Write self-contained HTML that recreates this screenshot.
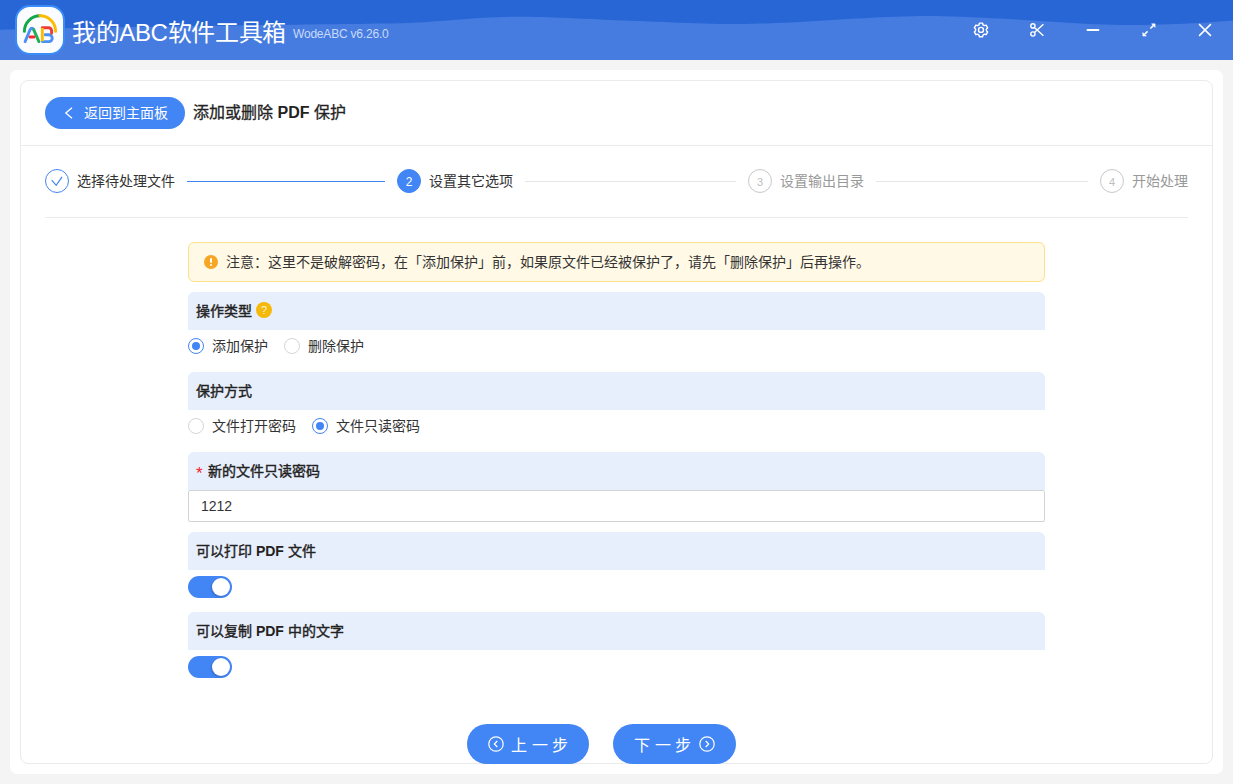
<!DOCTYPE html>
<html lang="zh-CN">
<head>
<meta charset="utf-8">
<style>
*{box-sizing:border-box;margin:0;padding:0}
html,body{width:1233px;height:784px;overflow:hidden;background:#f4f4f4;font-family:"Liberation Sans",sans-serif;color:#333}
.abs{position:absolute}
#hdr{position:absolute;left:0;top:0;width:1233px;height:60px;background:#467cdf;overflow:hidden}
#logo{position:absolute;left:15px;top:5px;width:50px;height:50px;border-radius:15px;background:#fbfcff;border:2px solid #3a8cf8}
#title{position:absolute;left:72px;top:17px;font-size:24px;line-height:32px;color:#fff;white-space:nowrap;letter-spacing:-0.35px}
#ver{position:absolute;left:293px;top:26px;font-size:12px;line-height:16px;color:#c9dafa;white-space:nowrap;letter-spacing:-0.2px}
#outer{position:absolute;left:10px;top:70px;width:1213px;height:704px;background:#fff;border-radius:7px}
#inner{position:absolute;left:20px;top:80px;width:1193px;height:684px;background:#fff;border:1px solid #ebebeb;border-radius:8px}
.btn{position:absolute;background:#4285f4;color:#fff;white-space:nowrap}
.t14{font-size:14px;line-height:20px;white-space:nowrap}
.hline{position:absolute;height:1px;background:#ebebeb}
.step-c{position:absolute;width:24px;height:24px;border-radius:50%;border:1px solid #4285f4;top:169px}
.step-c.g{border-color:#c8c8c8;color:#bdbdbd;font-size:11px;line-height:24px;text-align:center}
.sec{position:absolute;left:188px;width:857px;height:38px;background:#e8effc;border-radius:6px 6px 0 0}
.sec .lbl{position:absolute;left:8px;top:9px;font-size:14px;line-height:20px;color:#222;white-space:nowrap;-webkit-text-stroke:0.4px #222}
.sec .lbl b{-webkit-text-stroke:0}
.radio{position:absolute;width:16px;height:16px;border-radius:50%;border:1px solid #d6d6d6;background:#fff}
.radio.on{border-color:#4285f4}
.radio.on::after{content:"";position:absolute;left:3px;top:3px;width:8px;height:8px;border-radius:50%;background:#4285f4}
.toggle{position:absolute;left:188px;width:44px;height:22px;border-radius:11px;background:#4285f4}
.toggle::after{content:"";position:absolute;right:2px;top:2px;width:18px;height:18px;border-radius:50%;background:#fff;box-shadow:-1px 1px 2px rgba(0,30,90,0.25)}
</style>
</head>
<body>
<div id="hdr">
  <svg class="abs" style="left:0;top:0" width="1233" height="60">
    <path d="M0 0H1233V20.5L1233 20.5L1224 21.2L1216 21.8L1208 22.4L1200 22.9L1192 23.3L1184 23.7L1176 24.0L1168 24.3L1160 24.6L1152 24.8L1144 24.9L1136 25.0L1128 25.0L1120 24.9L1112 24.8L1104 24.6L1096 24.3L1088 23.9L1080 23.5L1072 23.0L1064 22.5L1056 22.0L1048 21.4L1040 20.9L1032 20.4L1024 19.9L1016 19.4L1008 19.0L1000 18.6L992 18.2L984 17.8L976 17.4L968 17.1L960 16.7L952 16.4L944 16.2L936 16.0L928 16.0L920 16.1L912 16.2L904 16.4L896 16.7L888 17.0L880 17.3L872 17.7L864 18.2L856 18.6L848 19.1L840 19.6L832 20.1L824 20.5L816 21.0L808 21.5L800 21.9L792 22.4L784 22.8L776 23.1L768 23.4L760 23.6L752 23.8L744 24.0L736 24.0L728 24.0L720 23.9L712 23.7L704 23.5L696 23.3L688 23.0L680 22.7L672 22.4L664 22.1L656 21.7L648 21.4L640 21.1L632 20.7L624 20.4L616 20.2L608 19.9L600 19.5L592 19.1L584 18.8L576 18.4L568 18.0L560 17.7L552 17.4L544 17.1L536 16.9L528 16.8L520 16.7L512 16.7L504 16.9L496 17.2L488 17.6L480 18.1L472 18.6L464 19.2L456 19.8L448 20.4L440 21.1L432 21.6L424 22.2L416 22.6L408 23.0L400 23.2L392 23.4L384 23.5L376 23.6L368 23.8L360 23.9L352 24.0L344 24.1L336 24.2L328 24.2L320 24.3L312 24.4L304 24.5L296 24.7L288 24.8L280 24.9L272 25.0L264 25.1L256 25.2L248 25.3L240 25.4L232 25.6L224 25.7L216 25.8L208 25.9L200 26.0L192 26.1L184 26.2L176 26.3L168 26.5L160 26.6L152 26.7L144 26.8L136 27.0L128 27.1L120 27.2L112 27.3L104 27.5L96 27.6L88 27.8L80 27.9L72 28.1L64 28.2L56 28.4L48 28.6L40 28.7L32 28.9L24 29.2L16 29.4L8 29.6L0 29.8Z" fill="#2866d6"/>
  </svg>
  <div id="logo">
    <svg class="abs" style="left:-2px;top:-2px" width="50" height="50" viewBox="0 0 50 50" fill="none" stroke-width="2.9" stroke-linecap="round">
      <path d="M9.4 26.4A15.6 15.6 0 0 1 25 10.8" stroke="#12a84a"/>
      <path d="M25 10.8A15.6 15.6 0 0 1 40.6 26.4" stroke="#fbbc05"/>
      <path d="M30.2 29.8H33.8A3.4 3.4 0 0 1 33.8 36.6H27.3" stroke="#4a90f5"/>
      <path d="M27.3 22.7H33.6A3 3 0 0 1 36.6 25.7V28.2" stroke="#f03a35"/>
      <path d="M27.3 22.9V36.2" stroke="#fbbc05" stroke-linecap="butt"/>
      <path d="M10.1 36.6L15 24.8Q16.9 21.8 18.8 24.8" stroke="#4a90f5"/>
      <path d="M18.8 24.8L23.9 36.6" stroke="#1db154"/>
      <path d="M15 32H19" stroke="#f52a30"/>
    </svg>
  </div>
  <div id="title">我的ABC软件工具箱</div>
  <div id="ver">WodeABC v6.26.0</div>
  <!-- window icons -->
  <svg class="abs" style="left:973px;top:22px" width="16" height="16" viewBox="0 0 16 16" fill="none" stroke="#fff" stroke-width="1.4">
    <path d="M6.03 2.77L6.43 1.08L9.57 1.08L9.97 2.77L11.46 3.63L13.12 3.13L14.69 5.85L13.43 7.04L13.43 8.76L14.69 9.95L13.12 12.67L11.46 12.17L9.97 13.03L9.57 14.72L6.43 14.72L6.03 13.03L4.54 12.17L2.88 12.67L1.31 9.95L2.57 8.76L2.57 7.04L1.31 5.85L2.88 3.13L4.54 3.63Z" stroke-linejoin="round"/>
    <circle cx="8" cy="7.9" r="2.5"/>
  </svg>
  <svg class="abs" style="left:1029px;top:22px" width="16" height="16" viewBox="0 0 16 16" fill="none" stroke="#fff" stroke-width="1.4">
    <circle cx="3.9" cy="3.9" r="2.1"/>
    <circle cx="3.9" cy="12" r="2.1"/>
    <path d="M5.4 5.4L14.4 13.8M5.4 10.5L14.4 2.2"/>
  </svg>
  <svg class="abs" style="left:1085px;top:22px" width="16" height="16" viewBox="0 0 16 16">
    <path d="M2.5 8H13.4" stroke="#fff" stroke-width="2" stroke-linecap="round"/>
  </svg>
  <svg class="abs" style="left:1141px;top:22px" width="16" height="16" viewBox="0 0 16 16">
    <path d="M9.4 6.55L12.3 3.65M6.55 9.4L3.65 12.3" stroke="#fff" stroke-width="1.5"/>
    <path d="M10.5 1.8H14.1V5.4ZM1.8 10.5V14.1H5.4Z" fill="#fff" stroke="#fff" stroke-width="0.5" stroke-linejoin="round"/>
  </svg>
  <svg class="abs" style="left:1197px;top:22px" width="16" height="16" viewBox="0 0 16 16">
    <path d="M2.1 2.1L13.9 13.9M13.9 2.1L2.1 13.9" stroke="#fff" stroke-width="1.5"/>
  </svg>
</div>

<div id="outer"></div>
<div id="inner"></div>

<!-- top bar of content -->
<div class="btn" style="left:45px;top:97px;width:140px;height:32px;border-radius:16px">
  <svg class="abs" style="left:19px;top:10px" width="10" height="12" viewBox="0 0 10 12"><path d="M8 0.8L1.8 6L8 11.2" stroke="#fff" stroke-width="1.3" fill="none"/></svg>
  <div class="abs t14" style="left:39px;top:6px">返回到主面板</div>
</div>
<div class="abs" style="left:193px;top:101px;font-size:16px;line-height:24px;color:#222;white-space:nowrap;-webkit-text-stroke:0.3px #222">添加或删除 <b style="-webkit-text-stroke:0">PDF</b> 保护</div>
<div class="hline" style="left:21px;top:145px;width:1191px"></div>

<!-- steps -->
<div class="step-c" style="left:45px">
  <svg class="abs" style="left:4px;top:4px" width="14" height="14" viewBox="0 0 14 14"><path d="M1.7 6.1L6.2 11.3L12 2.9" stroke="#4285f4" stroke-width="1.2" fill="none"/></svg>
</div>
<div class="abs t14" style="left:77px;top:171px;color:#333">选择待处理文件</div>
<div class="abs" style="left:187px;top:181px;width:198px;height:1px;background:#4285f4"></div>
<div class="step-c" style="left:397px;background:#4285f4;color:#fff;font-size:12px;line-height:24px;text-align:center">2</div>
<div class="abs t14" style="left:429px;top:171px;color:#333">设置其它选项</div>
<div class="abs" style="left:525px;top:181px;width:211px;height:1px;background:#e6e6e6"></div>
<div class="step-c g" style="left:748px">3</div>
<div class="abs t14" style="left:780px;top:171px;color:#999">设置输出目录</div>
<div class="abs" style="left:876px;top:181px;width:212px;height:1px;background:#e6e6e6"></div>
<div class="step-c g" style="left:1100px">4</div>
<div class="abs t14" style="left:1132px;top:171px;color:#999">开始处理</div>
<div class="hline" style="left:45px;top:217px;width:1143px"></div>

<!-- notice -->
<div class="abs" style="left:188px;top:242px;width:857px;height:40px;background:#fff9e6;border:1px solid #fce08e;border-radius:6px">
  <div class="abs" style="left:15px;top:12px;width:14px;height:14px;border-radius:50%;background:#f6a623">
    <div class="abs" style="left:6px;top:3px;width:2px;height:5px;background:#fff;border-radius:1px"></div>
    <div class="abs" style="left:6px;top:9px;width:2px;height:2px;background:#fff;border-radius:1px"></div>
  </div>
  <div class="abs t14" style="left:37px;top:9px;color:#333">注意：这里不是破解密码，在「添加保护」前，如果原文件已经被保护了，请先「删除保护」后再操作。</div>
</div>

<!-- section 1 -->
<div class="sec" style="top:292px"><div class="lbl">操作类型</div>
  <div class="abs" style="left:68px;top:10px;width:16px;height:16px;border-radius:50%;background:#f5b90b;color:rgba(255,255,255,0.85);font-size:11px;line-height:17px;text-align:center">?</div>
</div>
<div class="radio on" style="left:188px;top:338px"></div>
<div class="abs t14" style="left:212px;top:336px">添加保护</div>
<div class="radio" style="left:284px;top:338px"></div>
<div class="abs t14" style="left:308px;top:336px">删除保护</div>

<!-- section 2 -->
<div class="sec" style="top:372px"><div class="lbl">保护方式</div></div>
<div class="radio" style="left:188px;top:418px"></div>
<div class="abs t14" style="left:212px;top:416px">文件打开密码</div>
<div class="radio on" style="left:312px;top:418px"></div>
<div class="abs t14" style="left:336px;top:416px">文件只读密码</div>

<!-- section 3 -->
<div class="sec" style="top:452px"><div class="lbl"><span style="color:#f5222d;-webkit-text-stroke:0;font-size:17px;margin-right:5px;position:relative;top:3px">*</span>新的文件只读密码</div></div>
<div class="abs" style="left:188px;top:490px;width:857px;height:32px;border:1px solid #d3d3d3;border-radius:2px;background:#fff">
  <div class="abs t14" style="left:12px;top:5px;color:#333">1212</div>
</div>

<!-- section 4 -->
<div class="sec" style="top:532px"><div class="lbl">可以打印 <b>PDF</b> 文件</div></div>
<div class="toggle" style="top:576px"></div>

<!-- section 5 -->
<div class="sec" style="top:612px"><div class="lbl">可以复制 <b>PDF</b> 中的文字</div></div>
<div class="toggle" style="top:656px"></div>

<!-- bottom buttons -->
<div class="btn" style="left:467px;top:724px;width:122px;height:40px;border-radius:20px">
  <svg class="abs" style="left:21px;top:12px" width="16" height="16" viewBox="0 0 16 16"><circle cx="8" cy="8" r="7.2" stroke="#fff" stroke-width="1.2" fill="none"/><path d="M9.3 5L6.3 8L9.3 11" stroke="#fff" stroke-width="1.2" fill="none"/></svg>
  <div class="abs" style="left:44px;top:10px;font-size:16px;line-height:24px;letter-spacing:4.5px">上一步</div>
</div>
<div class="btn" style="left:613px;top:724px;width:123px;height:40px;border-radius:20px">
  <div class="abs" style="left:21px;top:10px;font-size:16px;line-height:24px;letter-spacing:4.5px">下一步</div>
  <svg class="abs" style="left:86px;top:12px" width="16" height="16" viewBox="0 0 16 16"><circle cx="8" cy="8" r="7.2" stroke="#fff" stroke-width="1.2" fill="none"/><path d="M6.7 5L9.7 8L6.7 11" stroke="#fff" stroke-width="1.2" fill="none"/></svg>
</div>
</body>
</html>
